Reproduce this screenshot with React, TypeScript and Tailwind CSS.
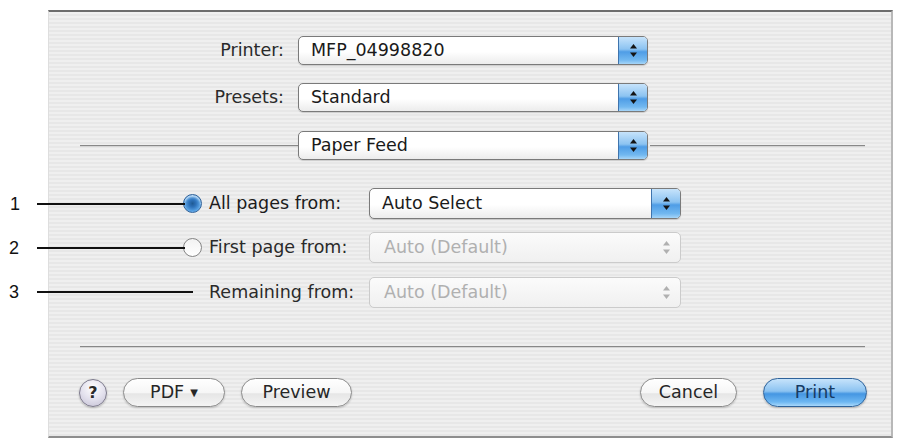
import * as React from "react";

function Arrows({ disabled }: { disabled?: boolean }) {
  const fill = disabled ? "#b0b0b0" : "#141414";
  return (
    <svg width="9" height="15" viewBox="0 0 9 15">
      <path d="M4.5 1 L8 5.5 L1 5.5 Z" fill={fill} />
      <path d="M4.5 14 L8 9.5 L1 9.5 Z" fill={fill} />
    </svg>
  );
}

function Popup({ text, className, disabled }: { text: string; className: string; disabled?: boolean }) {
  if (disabled) {
    return (
      <div className={`flex items-stretch rounded-[5px] border border-[#cbcbcb] bg-[linear-gradient(#fbfbfb,#f0f0f0)] ${className}`}>
        <span className="flex flex-1 items-center pl-[14px] text-[#b0b0b0]">{text}</span>
        <span className="flex w-[28px] items-center justify-center">
          <Arrows disabled />
        </span>
      </div>
    );
  }
  return (
    <div className={`flex items-stretch overflow-hidden rounded-[5px] border-[1.5px] border-[#7a7a7a] bg-[linear-gradient(#ffffff_0%,#ffffff_55%,#ececec_100%)] shadow-[0_1px_1px_rgba(0,0,0,0.15)] ${className}`}>
      <span className="flex flex-1 items-center pl-[12px] text-[#1a1a1a]">{text}</span>
      <span className="flex w-[29px] items-center justify-center border-l border-[#3f74ad] bg-[linear-gradient(#c6e3fb_0%,#8cc3f1_45%,#4f9de6_55%,#72b8f0_85%,#a6d5f8_100%)]">
        <Arrows />
      </span>
    </div>
  );
}

function Radio({ on }: { on?: boolean }) {
  if (on) {
    return (
      <span className="h-[19px] w-[19px] rounded-full border border-[#30629a] bg-[radial-gradient(circle_at_50%_50%,#1f5a94_0%,#2f73bb_30%,#5aa4e6_65%,#b9def9_100%)] shadow-[inset_0_2px_2px_rgba(255,255,255,0.6)]" />
    );
  }
  return (
    <span className="h-[19px] w-[19px] rounded-full border-[1.5px] border-[#858585] bg-[linear-gradient(#f2f2f2,#ffffff)]" />
  );
}

function PillButton({ children, className, blue }: { children: React.ReactNode; className: string; blue?: boolean }) {
  if (blue) {
    return (
      <button className={`flex h-[29px] items-center justify-center rounded-full border-[1.5px] border-[#2e629a] bg-[linear-gradient(#c6e3fb_0%,#8cc3f1_45%,#4596e2_55%,#6db7f2_85%,#a8d8fb_100%)] text-[#173a63] shadow-[0_1px_2px_rgba(0,0,0,0.25)] ${className}`}>
        {children}
      </button>
    );
  }
  return (
    <button className={`flex h-[29px] items-center justify-center rounded-full border-[1.5px] border-[#8a8a8a] bg-[linear-gradient(#ffffff_0%,#f6f6f6_50%,#e6e6e6_55%,#f4f4f4_100%)] text-[#262626] shadow-[0_1px_2px_rgba(0,0,0,0.2)] ${className}`}>
      {children}
    </button>
  );
}

export default function App() {
  return (
    <div className="relative h-[440px] w-[898px] overflow-hidden bg-white font-['DejaVu_Sans',sans-serif] text-[17.5px] leading-none text-[#2a2a2a]">
      <div className="ml-[48px] mt-[10px] flex h-[428px] w-[845px] flex-col border-b-2 border-l border-r-2 border-t-2 border-b-[#8e8e8e] border-l-[#dedede] border-r-[#b8b8b8] border-t-[#6c6c6c] bg-[repeating-linear-gradient(#efefef_0px,#efefef_2px,#e7e7e7_2px,#e7e7e7_4px)]">
        {/* printer / presets */}
        <div className="mt-[24px] flex h-[29px] items-center">
          <span className="w-[249px] pr-[14px] text-right">Printer:</span>
          <Popup text="MFP_04998820" className="h-[29px] w-[350px]" />
        </div>
        <div className="mt-[18px] flex h-[29px] items-center">
          <span className="w-[249px] pr-[14px] text-right">Presets:</span>
          <Popup text="Standard" className="h-[29px] w-[350px]" />
        </div>
        <div className="mt-[19px] flex h-[29px] items-center pl-[31px] pr-[26px]">
          <span className="h-[2px] w-[218px] bg-[linear-gradient(#888888_50%,#d4d4d4_50%)]" />
          <Popup text="Paper Feed" className="h-[29px] w-[350px]" />
          <span className="ml-[2px] h-[2px] flex-1 bg-[linear-gradient(#888888_50%,#d4d4d4_50%)]" />
        </div>

        {/* paper source */}
        <div className="mt-[28px] flex h-[31px] items-center pl-[134px]">
          <Radio on />
          <span className="ml-[7px] w-[160px] text-[#1c1c1c]">All pages from:</span>
          <Popup text="Auto Select" className="h-[31px] w-[312px]" />
        </div>
        <div className="mt-[13px] flex h-[31px] items-center pl-[134px]">
          <Radio />
          <span className="ml-[7px] w-[160px]">First page from:</span>
          <Popup text="Auto (Default)" className="h-[31px] w-[312px]" disabled />
        </div>
        <div className="mt-[14px] flex h-[31px] items-center pl-[134px]">
          <span className="w-[19px]" />
          <span className="ml-[7px] w-[160px]">Remaining from:</span>
          <Popup text="Auto (Default)" className="h-[31px] w-[312px]" disabled />
        </div>

        <div className="ml-[31px] mr-[26px] mt-[38px] h-[2px] bg-[linear-gradient(#888888_50%,#d4d4d4_50%)]" />

        {/* buttons */}
        <div className="mt-[30px] flex items-center pl-[30px] pr-[24px]">
          <span className="flex h-[28px] w-[28px] items-center justify-center rounded-full border-[1.5px] border-[#7d7a8c] bg-[radial-gradient(circle_at_50%_30%,#ffffff_0%,#e4e2ee_50%,#c3bfd3_100%)] text-[16px] font-bold text-[#2a2a2a] shadow-[0_1px_2px_rgba(0,0,0,0.25)]">
            ?
          </span>
          <PillButton className="ml-[16px] w-[102px]">
            <span>PDF</span>
            <span className="ml-[6px] text-[10px]">▼</span>
          </PillButton>
          <PillButton className="ml-[16px] w-[111px]">Preview</PillButton>
          <span className="flex-1" />
          <PillButton className="w-[97px]">Cancel</PillButton>
          <PillButton className="ml-[26px] w-[104px]" blue>
            Print
          </PillButton>
        </div>
      </div>

      {/* callouts */}
      <div className="absolute left-0 top-[195px] flex items-center font-['Liberation_Sans',sans-serif] text-[18px] text-[#111]">
        <span className="w-[37px] pl-[10px]">1</span>
        <span className="h-[2px] w-[148px] bg-[#111]" />
      </div>
      <div className="absolute left-0 top-[239px] flex items-center font-['Liberation_Sans',sans-serif] text-[18px] text-[#111]">
        <span className="w-[37px] pl-[9px]">2</span>
        <span className="h-[2px] w-[148px] bg-[#111]" />
      </div>
      <div className="absolute left-0 top-[283px] flex items-center font-['Liberation_Sans',sans-serif] text-[18px] text-[#111]">
        <span className="w-[37px] pl-[9px]">3</span>
        <span className="h-[2px] w-[156px] bg-[#111]" />
      </div>
    </div>
  );
}
